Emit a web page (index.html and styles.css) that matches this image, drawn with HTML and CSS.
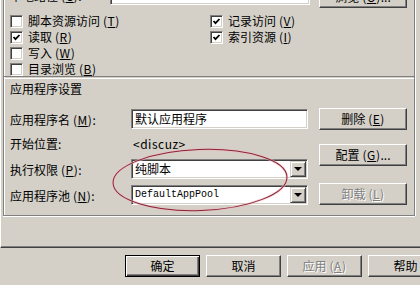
FILE: index.html
```html
<!DOCTYPE html>
<html>
<head>
	<meta charset="utf-8" />
	<title>虚拟目录</title>
	<link rel="stylesheet" href="styles.css">
</head>
<body>
	<div class="dialog">
		<div class="tabpage">
			<div class="frame">
				<div class="pathRow">
					<span class="label">本地路径<span class="key">(<u>C</u>)</span>:</span>
					<div class="field pathField"></div>
					<div class="btn browse">浏览<span class="key">(<u>O</u>)</span>...</div>
				</div>

				<div class="perms">
					<div class="permCol">
						<div class="check"><span class="box"></span>脚本资源访问<span class="key">(<u>T</u>)</span></div>
						<div class="check"><span class="box on"><svg viewBox="0 0 9 9"><polyline points="1.5,4 3.5,6.2 7.5,2"/></svg></span>读取<span class="key">(<u>R</u>)</span></div>
						<div class="check"><span class="box"></span>写入<span class="key">(<u>W</u>)</span></div>
						<div class="check"><span class="box"></span>目录浏览<span class="key">(<u>B</u>)</span></div>
					</div>
					<div class="permCol">
						<div class="check"><span class="box on"><svg viewBox="0 0 9 9"><polyline points="1.5,4 3.5,6.2 7.5,2"/></svg></span>记录访问<span class="key">(<u>V</u>)</span></div>
						<div class="check"><span class="box on"><svg viewBox="0 0 9 9"><polyline points="1.5,4 3.5,6.2 7.5,2"/></svg></span>索引资源<span class="key">(<u>I</u>)</span></div>
					</div>
				</div>

				<div class="sep"></div>
				<div class="groupTitle">应用程序设置</div>

				<div class="app">
					<div class="appForm">
						<div class="row rowName">
							<span class="label">应用程序名<span class="key">(<u>M</u>)</span>:</span>
							<div class="field">默认应用程序</div>
						</div>
						<div class="row rowStart">
							<span class="label">开始位置:</span>
							<span class="value">&lt;discuz&gt;</span>
						</div>
						<div class="row rowPerm">
							<span class="label">执行权限<span class="key">(<u>P</u>)</span>:</span>
							<div class="field combo">纯脚本<span class="drop"></span></div>
						</div>
						<div class="row rowPool">
							<span class="label">应用程序池<span class="key">(<u>N</u>)</span>:</span>
							<div class="field combo mono">DefaultAppPool<span class="drop"></span></div>
						</div>
					</div>
					<div class="appButtons">
						<div class="btn">删除<span class="key">(<u>E</u>)</span></div>
						<div class="btn config">配置<span class="key">(<u>G</u>)</span>...</div>
						<div class="btn disabled unload">卸载<span class="key">(<u>L</u>)</span></div>
					</div>
				</div>
			</div>
		</div>

		<div class="footer">
			<div class="btn wide default">确定</div>
			<div class="btn wide">取消</div>
			<div class="btn wide disabled">应用<span class="key">(<u>A</u>)</span></div>
			<div class="btn wide">帮助</div>
		</div>

		<!-- red ring drawn over the screenshot -->
		<svg class="mark" width="420" height="285" viewBox="0 0 420 285">
			<ellipse cx="200" cy="180" rx="87" ry="30.5" transform="rotate(-2 200 180)" class="halo"/>
			<ellipse cx="200" cy="180" rx="87" ry="30.5" transform="rotate(-2 200 180)" class="ring"/>
		</svg>
	</div>
</body>
</html>
```

FILE: styles.css
```css
body {
	margin: 0;
	background-color: #D4D0C8;
	font-family: "Noto Sans CJK SC", "DejaVu Sans", sans-serif;
	font-size: 12px;
	color: #000;
}
u {
	text-decoration: underline;
	text-underline-offset: 1px;
}
.key {
	margin-left: 3px;
	letter-spacing: 0.5px;
}
.dialog {
	position: relative;
	width: 420px;
	height: 285px;
	overflow: hidden;
}

/* tab page */
.tabpage {
	margin-top: -22px;
	width: 440px;
	height: 270px;
	padding: 0 0 0 2px;
	border-left: 1px solid #fff;
	border-bottom: 1px solid #404040;
	box-shadow: inset 0 -1px #808080;
	box-sizing: border-box;
}
.frame {
	width: 412px;
	box-sizing: border-box;
	padding: 6px 0 10px 6px;
	border-left: 1px solid #808080;
	border-right: 1px solid #808080;
	border-bottom: 1px solid #808080;
	box-shadow: inset 1px 0 #fff, 1px 0 #fff, 0 1px #fff;
}

/* fields and buttons */
.field {
	height: 21px;
	box-sizing: border-box;
	background-color: #fff;
	border: 1px solid;
	border-color: #808080 #fff #fff #808080;
	box-shadow: inset 1px 1px #404040, inset -1px -1px #D4D0C8;
	padding: 0 0 0 3px;
	line-height: 18px;
	position: relative;
	white-space: nowrap;
}
.btn {
	height: 22px;
	box-sizing: border-box;
	border: 1px solid;
	border-color: #fff #404040 #404040 #fff;
	box-shadow: inset -1px -1px #808080, inset 1px 1px #D4D0C8;
	text-align: center;
	line-height: 19px;
	white-space: nowrap;
}
.btn.default {
	border: 1px solid #000;
	box-shadow: inset 1px 1px #fff, inset -1px -1px #404040, inset -2px -2px #808080;
}
.btn.disabled {
	color: #808080;
	text-shadow: 1px 1px #fff;
}

/* top row */
.pathRow {
	display: flex;
	align-items: flex-start;
	height: 24px;
}
.pathRow .label {
	width: 100px;
	line-height: 14px;
	margin-top: 5px;
}
.pathField {
	width: 200px;
}
.browse {
	width: 88px;
	margin: 2px 0 0 9px;
}

/* permissions */
.perms {
	display: flex;
	height: 63px;
	margin-top: 5px;
}
.permCol {
	width: 200px;
}
.check {
	display: flex;
	align-items: center;
	height: 16px;
	line-height: 16px;
}
.box {
	width: 13px;
	height: 13px;
	box-sizing: border-box;
	margin-right: 5px;
	background-color: #fff;
	border: 1px solid;
	border-color: #808080 #fff #fff #808080;
	box-shadow: inset 1px 1px #404040, inset -1px -1px #D4D0C8;
	display: flex;
	align-items: center;
	justify-content: center;
}
.box svg {
	width: 9px;
	height: 9px;
}
.box polyline {
	fill: none;
	stroke: #000;
	stroke-width: 1.8;
}
.sep {
	margin-left: -6px;
	height: 1px;
	border-top: 1px solid #808080;
	border-bottom: 1px solid #fff;
}
.groupTitle {
	line-height: 14px;
	margin-top: 3px;
}

/* application settings */
.app {
	display: flex;
	margin-top: 12px;
}
.appForm {
	width: 298px;
	padding-top: 1px;
}
.row {
	display: flex;
	align-items: center;
	height: 20px;
}
.row .label {
	width: 121px;
	flex: none;
}
.row .field {
	width: 177px;
	height: 20px;
}
.rowStart {
	margin-top: 4px;
}
.rowStart .value {
	padding-left: 2px;
	letter-spacing: 0.5px;
}
.rowPerm {
	margin-top: 6px;
}
.rowPool {
	margin-top: 6px;
}
.mono {
	font-family: "Liberation Mono", "Noto Sans CJK SC", monospace;
	font-size: 10px;
}
.combo .drop {
	position: absolute;
	right: 1px;
	top: 1px;
	width: 16px;
	height: 16px;
	box-sizing: border-box;
	background-color: #D4D0C8;
	border: 1px solid;
	border-color: #D4D0C8 #404040 #404040 #D4D0C8;
	box-shadow: inset 1px 1px #fff, inset -1px -1px #808080;
}
.combo .drop:after {
	content: "";
	position: absolute;
	left: 3px;
	top: 5px;
	border-left: 4px solid transparent;
	border-right: 4px solid transparent;
	border-top: 4px solid #000;
}
.appButtons {
	width: 88px;
	margin-left: 11px;
}
.config {
	margin-top: 14px;
}
.unload {
	margin-top: 17px;
}

/* bottom buttons */
.footer {
	display: flex;
	gap: 6px;
	margin: 7px 0 0 125px;
}
.btn.wide {
	width: 75px;
	flex: none;
}

/* the hand drawn ring */
.mark {
	position: absolute;
	left: 0;
	top: 0;
	pointer-events: none;
}
.mark .halo {
	fill: none;
	stroke: #f0b8c0;
	stroke-width: 2.6;
	opacity: 0.6;
}
.mark .ring {
	fill: none;
	stroke: #8a2434;
	stroke-width: 1;
}
```
